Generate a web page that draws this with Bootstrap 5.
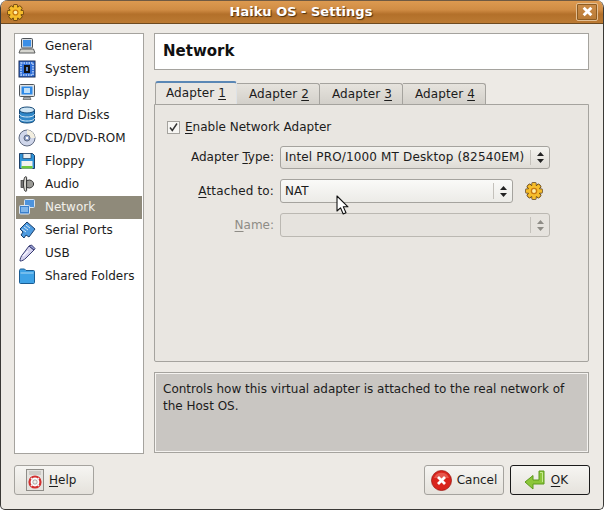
<!DOCTYPE html>
<html lang="en">
<head>
<meta charset="utf-8">
<title>Haiku OS - Settings</title>
<link href="https://cdn.jsdelivr.net/npm/bootstrap@5.3.0/dist/css/bootstrap.min.css" rel="stylesheet">
<style>
html,body{margin:0;height:510px;width:604px;overflow:hidden;background:#fff}
body{font-family:"DejaVu Sans",sans-serif;font-size:12px;line-height:16px;color:#1c1c1c}
u{text-underline-offset:2px}
.gwin{width:604px;height:510px;background:#edeae5;border:1px solid #3a3936;border-top:0;border-radius:8px 8px 5px 5px;overflow:hidden;position:relative}
.gtitle{height:24px;background:linear-gradient(#dd9a50 0,#d08c44 40%,#b3702a 60%,#bb7a33 100%);border-bottom:1px solid #6d4a20;border-top:1px solid #6f5a43;padding:0 5px 0 6px}
.gtitle-text{font-weight:700;font-size:13px;color:#fff;text-shadow:1px 1px 1px #4b2f10;padding-left:2px;margin-top:-1px}
.gclose{width:22px;height:18px;border:1px solid #e3bf94;border-radius:2px;background:linear-gradient(#cc8c48,#b87a35);box-shadow:0 0 0 1px #8d5c22 inset;margin-top:-1px}
.gbody{padding:9px 0 0 13px;height:430px}
.gside{width:130px;height:421px;background:#fff;border:1px solid #a5a39e;padding:1px 1px 0}
.gside .list-group-item,.gside .list-group-item+.list-group-item.active{height:23px;padding:0 0 2px 2px;border:0;background:transparent;color:#1c1c1c;font-size:12px;gap:9px;border-radius:0;margin:0}
.gside .list-group-item.active,.gside .list-group-item+.list-group-item.active{background:#8f8a7a;color:#f2f0ea}
.gside .list-group-item svg{flex:0 0 18px}
.gmain{width:435px;margin-left:10px}
.ghead{height:37px;background:#fff;border:1px solid #a5a39e;padding:0 0 2px 8px;font-weight:700;font-size:15px;color:#111;margin-bottom:12px}
.gtabs{border:0;height:22px;padding-left:1px;flex-wrap:nowrap;position:relative;z-index:1}
.gtabs .nav-link{height:21px;margin:1px 0 0;padding:0 10px 0 12px;font-size:12px;color:#1c1c1c;border:1px solid #a5a39e;border-bottom:0;border-left:0;border-radius:0 3px 0 0;background:linear-gradient(#e6e3dd,#d3d0ca);line-height:21px;letter-spacing:.1px}
.gtabs .nav-link.active{height:23px;margin:-1px 0 -1px;background:#e9e6e1;color:#1c1c1c;border-left:1px solid #a5a39e;border-top:2px solid #5a87b5;border-radius:3px 3px 0 0;line-height:20px;padding:0 10px}
.gpanel{height:258px;background:#e9e6e1;border:1px solid #a5a39e;border-radius:0 0 2px 2px;padding:14px 0 0 12px}
.gcheckrow{margin-bottom:11px}
.gcheck{width:13px;height:13px;background:#f7f6f3;border:1px solid #a5a39e;margin-right:5px}
.gform-row{height:24px;margin-bottom:10px}
.gform-row.gshort{height:23px}
.gform-label{width:113px;text-align:right;padding-right:6px;flex:none;padding-bottom:1px}
.gwide{letter-spacing:.15px}
.gcombo{height:100%;width:270px;border:1px solid #a5a39e;border-radius:3px;background:linear-gradient(#f4f3ef,#dfdcd6);padding:0 0 1px 4px;position:relative}
.gcombo.gw2{width:233px;background:linear-gradient(#fafaf8,#ecebe7)}
.gcombo-arrows{position:absolute;right:0;top:3px;bottom:3px;width:19px;border-left:1px solid #c4c1bb;display:flex;align-items:center;justify-content:center}
.gdim{color:#8e8c86}
.gcombo.gdis{background:#e6e3de;border-color:#bbb8b2}
.ggear2{margin-left:12px}
.gdesc{height:81px;background:#c9c6c2;border:1px solid #a5a39e;box-shadow:0 0 0 1px #f5f3f0 inset;margin-top:10px;padding:8px;line-height:17px}
.gfoot{padding:11px 13px 0 13px}
.gbtn{width:80px;height:30px;padding:0;font-size:12px;color:#1c1c1c;border:1px solid #a5a39e;border-radius:3px;background:linear-gradient(#f6f5f2,#e5e2dc);gap:5px}
.gbtn.gdef{border-color:#1a1a1a;margin-left:6px;padding-right:8px}
.gbtn.ghelp{padding-left:11px}
.gptr{position:absolute;left:335px;top:195px}
</style>
</head>
<body>
<div class="gwin">
  <svg width="0" height="0" class="position-absolute">
    <defs>
      <g id="gteeth">
        <rect x="6.400" y=".9" width="3.200" height="14.200" rx=".5"/>
        <rect x="6.400" y=".9" width="3.200" height="14.200" rx=".5" transform="rotate(45 8 8)"/>
        <rect x="6.400" y=".9" width="3.200" height="14.200" rx=".5" transform="rotate(90 8 8)"/>
        <rect x="6.400" y=".9" width="3.200" height="14.200" rx=".5" transform="rotate(135 8 8)"/>
        <circle cx="8" cy="8" r="5.200"/>
      </g>
      <symbol id="gear" viewBox="0 0 16 16">
        <use href="#gteeth" fill="#5f3c08" stroke="#5f3c08" stroke-width="1.300"/>
        <use href="#gteeth" fill="#f6bd2c"/>
        <circle cx="8" cy="8" r="2.900" fill="#c97a10"/>
        <circle cx="8" cy="8" r="1.700" fill="#fff0a8"/>
      </symbol>
    </defs>
  </svg>

  <div class="gtitle d-flex align-items-center">
    <svg width="17" height="17" viewBox="0 0 16 16"><use href="#gear"/></svg>
    <div class="gtitle-text flex-grow-1 text-center">Haiku OS - Settings</div>
    <div class="gclose d-flex align-items-center justify-content-center">
      <svg width="11" height="11" viewBox="0 0 10 10"><path d="M1.500 1.500l7 7M8.500 1.500l-7 7" stroke="#fff" stroke-width="2.600"/></svg>
    </div>
  </div>

  <div class="gbody d-flex">
    <div class="gside">
      <div class="list-group">
        <div class="list-group-item d-flex align-items-center"><svg width="18" height="18" viewBox="0 0 18 18"><rect x="3.500" y="1.500" width="11" height="9.500" rx="1" fill="#d8dce0" stroke="#4c5258"/><rect x="5" y="3" width="8" height="6.500" fill="#3b8fe8"/><path d="M1 16l1.500-4h13l1.500 4z" fill="#d5d5cf" stroke="#5b5d5c"/></svg><span>General</span></div>
        <div class="list-group-item d-flex align-items-center"><svg width="18" height="18" viewBox="0 0 18 18"><rect x="1" y="1" width="16" height="16" fill="#2f6fd8" stroke="#1c2c54"/><path d="M3 3h12v12H3z" fill="none" stroke="#bfd5f8" stroke-width="1.500" stroke-dasharray="1.500 1"/><rect x="6" y="5" width="6" height="8" fill="#111"/><rect x="8" y="7" width="2" height="4" fill="#5b89cf"/></svg><span>System</span></div>
        <div class="list-group-item d-flex align-items-center"><svg width="18" height="18" viewBox="0 0 18 18"><rect x="1.500" y="1.500" width="15" height="12" rx="1" fill="#dfe3e6" stroke="#4f555a"/><rect x="3.500" y="3.500" width="11" height="8" fill="#2e8ae8"/><rect x="6" y="5" width="6" height="5" fill="#bfe0fa"/><path d="M6 14h6l1 2.500H5z" fill="#a9adb0" stroke="#5b5d5c" stroke-width=".7"/></svg><span>Display</span></div>
        <div class="list-group-item d-flex align-items-center"><svg width="18" height="18" viewBox="0 0 18 18"><path d="M1.500 4v10c0 2 3.500 3 7.500 3s7.500-1 7.500-3V4z" fill="#2f87c8" stroke="#164a78"/><ellipse cx="9" cy="4" rx="7.500" ry="3" fill="#cfe6f5" stroke="#164a78"/><path d="M1.500 8c0 2 3.500 3 7.500 3s7.500-1 7.500-3M1.500 12c0 2 3.500 3 7.500 3s7.500-1 7.500-3" fill="none" stroke="#d8eaf6"/></svg><span>Hard Disks</span></div>
        <div class="list-group-item d-flex align-items-center"><svg width="18" height="18" viewBox="0 0 18 18"><circle cx="9" cy="9" r="8" fill="#cfd6ea" stroke="#5f6a80"/><path d="M9 1a8 8 0 0 1 8 8H12a3 3 0 0 0-3-3z" fill="#f2eee0"/><circle cx="9" cy="9" r="3" fill="#8fa0c8" stroke="#5f6a80"/><circle cx="9" cy="9" r="1.200" fill="#fff"/></svg><span>CD/DVD-ROM</span></div>
        <div class="list-group-item d-flex align-items-center"><svg width="18" height="18" viewBox="0 0 18 18"><path d="M1.500 1.500h13l2 2v13h-15z" fill="#2f93d8" stroke="#1d3f66"/><rect x="5" y="1.500" width="8" height="5" fill="#e8eef2" stroke="#1d3f66" stroke-width=".7"/><rect x="3.500" y="9" width="11" height="7.500" fill="#f3f3ee"/><rect x="3.500" y="14" width="11" height="2.500" fill="#6ec83c"/></svg><span>Floppy</span></div>
        <div class="list-group-item d-flex align-items-center"><svg width="18" height="18" viewBox="0 0 18 18"><path d="M7 2C5 5 5 13 7 16c.8.7 1.600.4 1.600-.5V2.500C8.600 1.600 7.800 1.400 7 2z" fill="#d8d8d2" stroke="#333"/><path d="M8.600 5.500l3-.5c2.600.5 4 2 4 4s-1.400 3.500-4 4l-3-.5z" fill="#9a9a96" stroke="#333"/><rect x="3" y="5.500" width="2.500" height="7" fill="#777" stroke="#333" stroke-width=".7"/></svg><span>Audio</span></div>
        <div class="list-group-item d-flex align-items-center active"><svg width="18" height="18" viewBox="0 0 18 18"><rect x="6.500" y="1.500" width="10" height="8" rx="1" fill="#4d93dd" stroke="#d8e4f0"/><rect x="1.500" y="7.500" width="10" height="8.500" rx="1" fill="#3a7fcc" stroke="#d8e4f0"/><rect x="3" y="9" width="7" height="5" fill="#7fb5ea"/></svg><span>Network</span></div>
        <div class="list-group-item d-flex align-items-center"><svg width="18" height="18" viewBox="0 0 18 18"><path d="M9 1l8 7-6 8-3-2-2 3-3-3 2-3-3-3z" fill="#4d9be0" stroke="#1c3f6a"/><path d="M6 6l4 3M8 4l4 3M4 8l4 3" stroke="#d5e7f7"/></svg><span>Serial Ports</span></div>
        <div class="list-group-item d-flex align-items-center"><svg width="18" height="18" viewBox="0 0 18 18"><path d="M11 2l5 4-8 8c-2 2-4 3-6 3 0-2 1-5 3-7z" fill="#d5d2ee" stroke="#353a70"/><path d="M11 2l2.500-1L17 4.500 16 6z" fill="#9ba2d8" stroke="#353a70"/><path d="M5 12l5-5" stroke="#f5f5ff" stroke-width="1.500"/></svg><span>USB</span></div>
        <div class="list-group-item d-flex align-items-center"><svg width="18" height="18" viewBox="0 0 18 18"><path d="M1.500 5V15.500c0 .6.400 1 1 1h13c.6 0 1-.4 1-1V4.500c0-.6-.4-1-1-1H8L6.500 2H3c-.8 0-1.500.6-1.500 1.500z" fill="#3ea2e6" stroke="#1a5c92"/><path d="M2.500 6h13" stroke="#a8d8f6"/></svg><span>Shared Folders</span></div>
      </div>
    </div>

    <div class="gmain">
      <div class="ghead d-flex align-items-center">Network</div>
      <ul class="nav nav-tabs gtabs">
        <li class="nav-item"><a class="nav-link active" href="#">Adapter <u>1</u></a></li>
        <li class="nav-item"><a class="nav-link" href="#">Adapter <u>2</u></a></li>
        <li class="nav-item"><a class="nav-link" href="#">Adapter <u>3</u></a></li>
        <li class="nav-item"><a class="nav-link" href="#">Adapter <u>4</u></a></li>
      </ul>
      <div class="gpanel">
        <div class="gcheckrow d-flex align-items-center">
          <div class="gcheck d-flex align-items-center justify-content-center"><svg width="11" height="11" viewBox="0 0 11 11"><path d="M2 5.500l2.300 3L9 1.500" fill="none" stroke="#333" stroke-width="1.500"/></svg></div>
          <span><u>E</u>nable Network Adapter</span>
        </div>
        <div class="gform-row gshort d-flex align-items-center">
          <div class="gform-label">Adapter <u>T</u>ype:</div>
          <div class="gcombo gwide d-flex align-items-center">Intel PRO/1000 MT Desktop (82540EM)<span class="gcombo-arrows"><svg width="9" height="13" viewBox="0 0 9 13"><path d="M4.500 1l3.500 4H1zM4.500 12L1 8h7z" fill="#222"/></svg></span></div>
        </div>
        <div class="gform-row d-flex align-items-center">
          <div class="gform-label gwide"><u>A</u>ttached to:</div>
          <div class="gcombo gw2 d-flex align-items-center">NAT<span class="gcombo-arrows"><svg width="9" height="13" viewBox="0 0 9 13"><path d="M4.500 1l3.500 4H1zM4.500 12L1 8h7z" fill="#222"/></svg></span></div>
          <svg class="ggear2" width="18" height="18" viewBox="0 0 16 16"><use href="#gear"/></svg>
        </div>
        <div class="gform-row d-flex align-items-center">
          <div class="gform-label gdim"><u>N</u>ame:</div>
          <div class="gcombo gdis d-flex align-items-center"><span class="gcombo-arrows"><svg width="9" height="13" viewBox="0 0 9 13"><path d="M4.500 1l3.500 4H1zM4.500 12L1 8h7z" fill="#8e8c86"/></svg></span></div>
        </div>
      </div>
      <div class="gdesc">Controls how this virtual adapter is attached to the real network of the Host OS.</div>
    </div>
  </div>

  <div class="gfoot d-flex align-items-center">
    <button class="btn gbtn ghelp d-inline-flex align-items-center" type="button">
      <svg width="18" height="22" viewBox="0 0 18 22"><rect x=".5" y=".5" width="17" height="21" fill="#e5e3df" stroke="#8f8d88"/><path d="M3 3h12M3 5h12" stroke="#b5b3ad"/><circle cx="9" cy="13" r="5.500" fill="#fff" stroke="#d32f2f" stroke-width="2.200"/><path d="M5 9l2 2M13 9l-2 2M5 17l2-2M13 17l-2-2" stroke="#eee" stroke-width="1.500"/><circle cx="9" cy="13" r="2.200" fill="#f1efea" stroke="#777" stroke-width=".6"/></svg>
      <span><u>H</u>elp</span>
    </button>
    <div class="flex-grow-1"></div>
    <button class="btn gbtn d-inline-flex align-items-center justify-content-center" type="button">
      <svg width="21" height="21" viewBox="0 0 21 21"><circle cx="10.500" cy="10.500" r="10" fill="#d9241c" stroke="#9c1612" stroke-width=".8"/><path d="M3 8a8 8 0 0 1 15 0" fill="#ee7a6e" opacity=".6"/><path d="M7 7l7 7M14 7l-7 7" stroke="#fff" stroke-width="2.800"/></svg>
      <span>Cancel</span>
    </button>
    <button class="btn gbtn gdef d-inline-flex align-items-center justify-content-center" type="button">
      <svg width="22" height="21" viewBox="0 0 22 21"><path d="M15 1h5v13H9v5L1 12l8-6.500V10h6z" fill="#8cc63a" stroke="#5c9a1c"/><path d="M16 2.500h2.500V12" fill="none" stroke="#c5ea8e"/></svg>
      <span><u>O</u>K</span>
    </button>
  </div>

  <svg class="gptr" width="15" height="21" viewBox="0 0 15 21"><path d="M1 1v15l3.500-3.200 2.700 6.200 2.800-1.200-2.700-6h4.700z" fill="#fff" stroke="#111" stroke-width="1.100" stroke-linejoin="round"/></svg>
</div>
<script src="https://cdn.jsdelivr.net/npm/bootstrap@5.3.0/dist/js/bootstrap.bundle.min.js"></script>
</body>
</html>
